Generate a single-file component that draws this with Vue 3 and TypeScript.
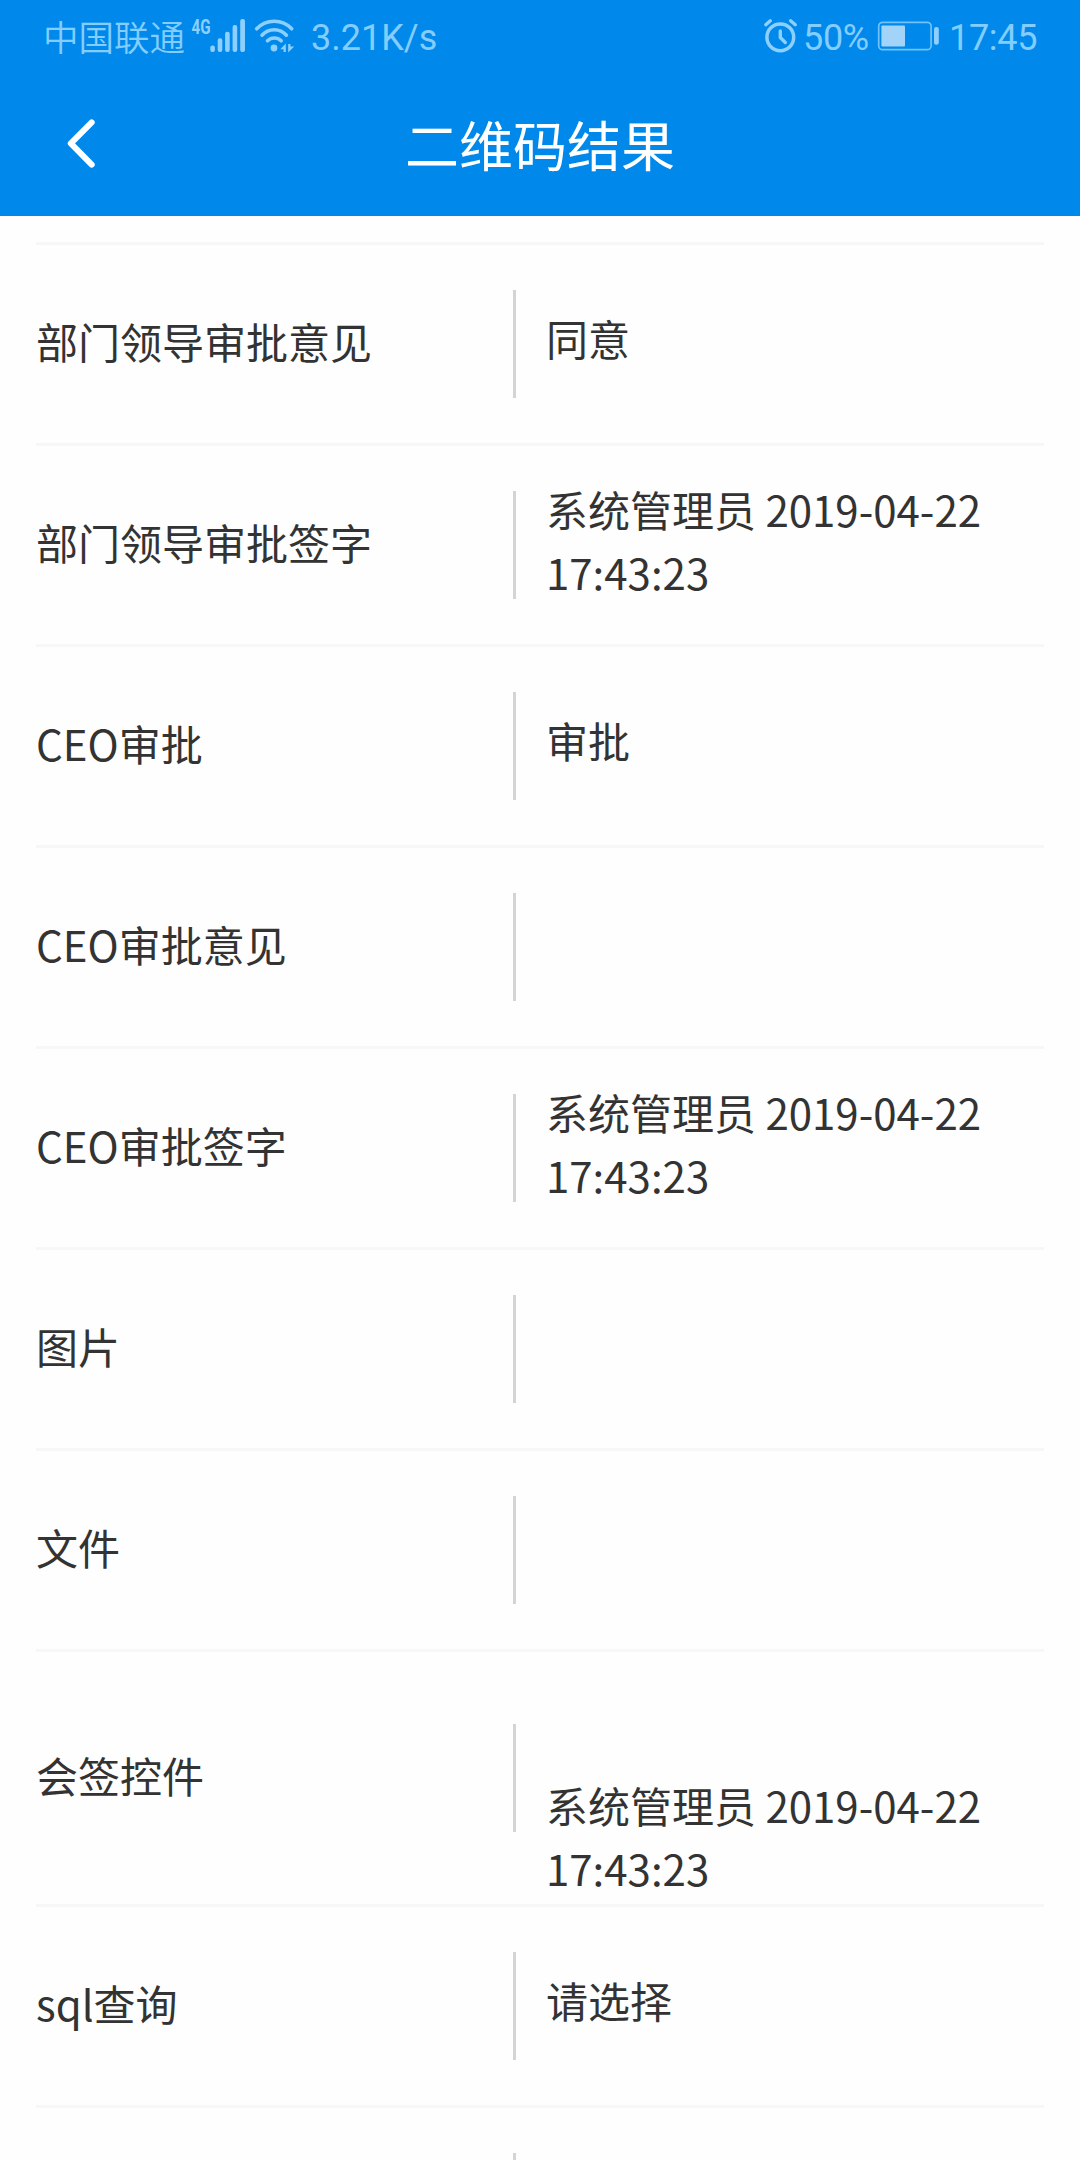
<script setup lang="ts">
interface Row {
  label: string
  value: string
  kind?: 'signed' | 'offset'
}

const rows: Row[] = [
  { label: '部门领导审批意见', value: '同意' },
  { label: '部门领导审批签字', value: '系统管理员 2019-04-22 17:43:23', kind: 'signed' },
  { label: 'CEO审批', value: '审批' },
  { label: 'CEO审批意见', value: '' },
  { label: 'CEO审批签字', value: '系统管理员 2019-04-22 17:43:23', kind: 'signed' },
  { label: '图片', value: '' },
  { label: '文件', value: '' },
  { label: '会签控件', value: '系统管理员 2019-04-22 17:43:23', kind: 'offset' },
  { label: 'sql查询', value: '请选择' },
  { label: '', value: '' },
]
</script>

<template>
  <div class="screen">
    <header class="top">
      <div class="status">
        <div class="group">
          <span class="carrier">中国联通</span>
          <svg class="network" width="108" height="44" viewBox="190 15 108 44">
            <text x="191.5" y="34" textLength="19" lengthAdjust="spacingAndGlyphs" class="net-type">4G</text>
            <g fill="#8dd0ff">
              <rect x="210.3" y="45.5" width="4.6" height="6.5" rx="2" />
              <rect x="217.7" y="38.3" width="4.6" height="13.7" rx="2" />
              <rect x="225.1" y="31.7" width="4.6" height="20.3" rx="2" />
              <rect x="232.6" y="25" width="4.6" height="27" rx="2" />
              <rect x="240.2" y="19" width="4.8" height="33" rx="2" />
              <circle cx="274" cy="48" r="3.4" />
              <path d="M280.3 49.2 285.8 43.6V52H283.6V49.2Z" />
              <path d="M288.2 44H290.4V46.6H294.2L288.2 52.4Z" />
            </g>
            <g fill="none" stroke="#8dd0ff" stroke-width="3.6" stroke-linecap="round">
              <path d="M256.7 28.8A24.2 24.2 0 0 1 291.7 28.8" />
              <path d="M262 35.2A16.4 16.4 0 0 1 286.4 35.2" />
              <path d="M267.5 40.8A9.7 9.7 0 0 1 281.2 40.8" />
            </g>
          </svg>
          <span class="speed">3.21K/s</span>
        </div>
        <div class="group">
          <svg width="36" height="40" viewBox="762 18 36 40" fill="none" stroke="#8dd0ff" stroke-linecap="round" stroke-linejoin="round">
            <circle cx="779.3" cy="38.3" r="13.4" stroke-width="3.5" />
            <path d="M779.3 32V38.5L784.3 43.5" stroke-width="3.4" />
            <path d="M764.8 25.7 769.3 21.8M789.6 21.8 794.3 25.7" stroke-width="3.4" />
          </svg>
          <span class="percent">50%</span>
          <svg class="battery" width="64" height="40" viewBox="876 18 64 40">
            <rect x="878.7" y="23.3" width="52.4" height="27.4" rx="4" fill="none" stroke="#6fc2fb" stroke-width="1.7" />
            <rect x="881.4" y="26.5" width="23.6" height="21" rx="1" fill="#a2d4fa" />
            <rect x="934" y="27.9" width="4.8" height="17.8" rx="2.2" fill="#8dd0ff" />
          </svg>
          <span class="clock">17:45</span>
        </div>
      </div>
      <div class="nav">
        <button class="back" aria-label="返回">
          <svg width="36" height="56" viewBox="63 115 36 56" fill="none" stroke="#fff" stroke-width="6" stroke-linecap="round" stroke-linejoin="round">
            <path d="M91.7 122.4 70.8 143.4 91.7 164.6" />
          </svg>
        </button>
        <h1>二维码结果</h1>
      </div>
    </header>

    <main class="list">
      <div v-for="(row, i) in rows" :key="i" class="row">
        <div class="label">{{ row.label }}</div>
        <div class="divider"></div>
        <div class="value" :class="row.kind">{{ row.value }}</div>
      </div>
    </main>
  </div>
</template>

<style>
body {
  margin: 0;
  background: #fefefe;
}
</style>

<style scoped>
.screen {
  width: 1080px;
  height: 2160px;
  overflow: hidden;
  background: #fefefe;
  color: #333;
  font-family: "Noto Sans CJK SC", sans-serif;
  font-weight: 400;
}
.top {
  height: 216px;
  background: #0089ea;
}
.status {
  display: flex;
  justify-content: space-between;
  height: 74px;
  padding: 0 41px 0 43px;
  color: #84cdff;
  font-size: 36px;
  line-height: 74px;
}
.group {
  display: flex;
  align-items: center;
  white-space: nowrap;
}
.carrier {
  width: 147px;
  padding-bottom: 2px;
  font-size: 35.5px;
  font-weight: 350;
}
.net-type {
  font: bold 20px "Roboto", sans-serif;
  fill: #8dd0ff;
}
.speed,
.percent,
.clock {
  padding-top: 2px;
  font-family: "Roboto", sans-serif;
}
.speed {
  margin-left: 13px;
}
.percent {
  width: 73px;
  margin-left: 4px;
  letter-spacing: -0.3px;
}
.clock {
  width: 90px;
  margin-left: 9px;
  letter-spacing: -0.3px;
}
.nav {
  display: grid;
  grid-template-columns: 162px 1fr 162px;
  align-items: center;
  height: 140px;
}
.back {
  display: flex;
  width: 162px;
  height: 138px;
  padding: 0 0 2px 63px;
  align-items: center;
  border: 0;
  background: none;
}
.nav h1 {
  margin: 0;
  color: #fff;
  font-size: 54px;
  font-weight: 400;
  line-height: 80px;
  text-align: center;
}
.list {
  margin: 26px 36px 0;
  border-top: 3px solid #f7f7f7;
}
.row {
  display: flex;
  align-items: center;
  min-height: 198px;
  border-bottom: 3px solid #f7f7f7;
  font-size: 42px;
  line-height: 63px;
}
.label {
  width: 477px;
  padding-bottom: 8px;
}
.divider {
  width: 3px;
  height: 108px;
  background: #d4d4d4;
}
.value {
  width: 480px;
  padding: 0 0 14px 30px;
}
.value.signed {
  padding-bottom: 10px;
}
.value.offset {
  padding-top: 121px;
  padding-bottom: 5px;
}
</style>
